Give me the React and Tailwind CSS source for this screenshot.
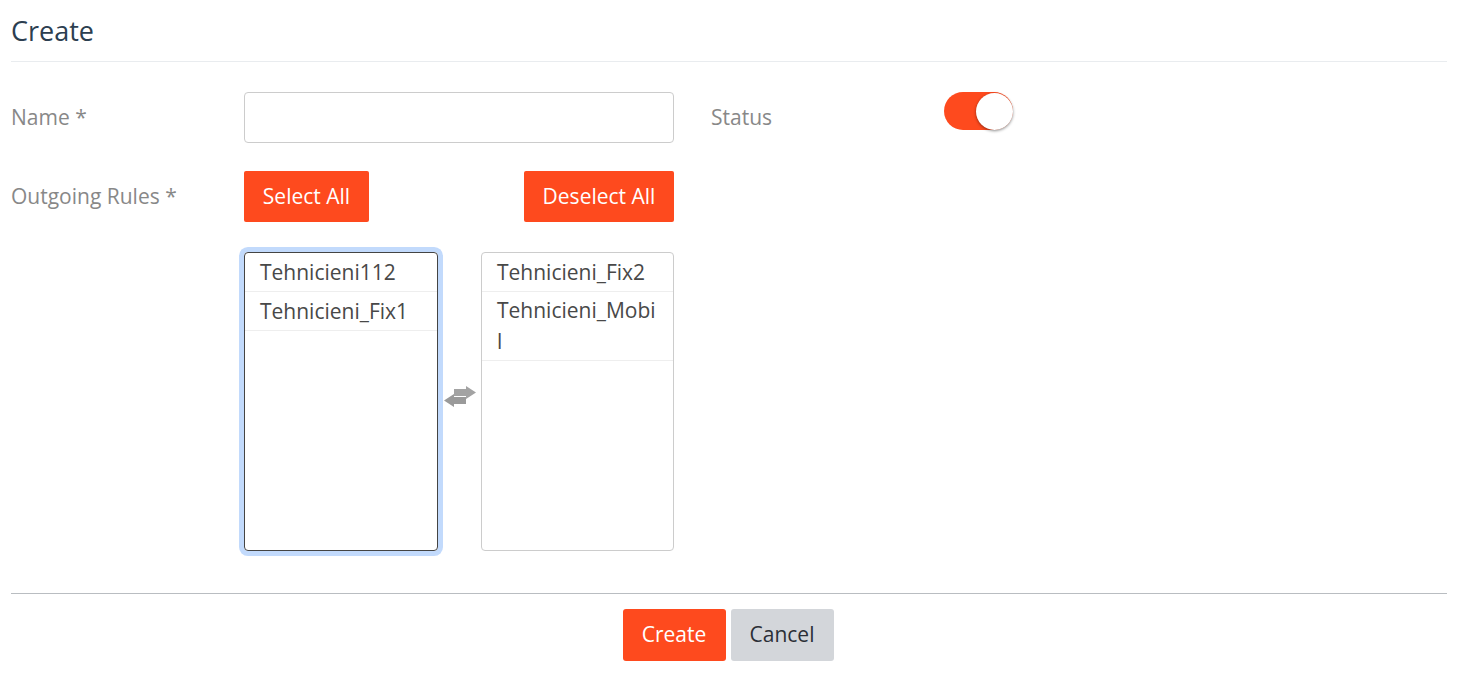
import React from "react";

function TransferIcon() {
  return (
    <svg width="34" height="22" viewBox="0 0 34 22">
      <path d="M11 3 H23 V0 L33 6.5 L23 13 V10 H11 Z" fill="#a3a3a3" />
      <path d="M23 11 H11 V8 L1 14.5 L11 21 V18 H23 Z" fill="#9a9a9a" />
    </svg>
  );
}

export default function App() {
  const font = { fontFamily: '"Open Sans", "Noto Sans", sans-serif' };
  return (
    <div className="w-[1461px] h-[673px] bg-white px-[11px] pt-[13px]" style={font}>
      <h1 className="text-[27px] leading-[36px] text-[#2c3e50] font-normal">Create</h1>
      <div className="mt-[12px] h-px bg-[#e9ecef] w-[1436px]" />

      <div className="mt-[30px] flex gap-[37px]">
        <div className="flex">
          <label className="w-[233px] text-[21px] text-[#888] flex items-center h-[51px]">Name *</label>
          <input className="w-[430px] h-[51px] border border-[#ccc] rounded-[4px] px-3 outline-none" />
        </div>
        <div className="flex">
          <label className="w-[233px] text-[21px] text-[#888] flex items-center h-[51px]">Status</label>
          <div className="h-[38px] w-[69px] rounded-full bg-[#fe4a1e] relative">
            <div className="absolute right-0 top-px w-[37px] h-[37px] rounded-full bg-white shadow-[0_1px_3px_rgba(0,0,0,0.45)]" />
          </div>
        </div>
      </div>

      <div className="mt-[28px] flex">
        <label className="w-[233px] text-[21px] text-[#888] flex items-center h-[51px]">Outgoing Rules *</label>
        <div className="w-[430px] flex justify-between">
          <button className="h-[51px] w-[125px] bg-[#fe4a1e] text-white text-[21px] rounded-[2px]">Select All</button>
          <button className="h-[51px] w-[150px] bg-[#fe4a1e] text-white text-[21px] rounded-[2px]">Deselect All</button>
        </div>
      </div>

      <div className="mt-[30px] ml-[233px] flex w-[430px]">
        <div className="w-[194px] h-[299px] border border-[#444] rounded-[4px] ring-[5px] ring-[#c2dafc] overflow-hidden">
          <div className="px-[15px] py-[2px] leading-[34px] text-[21px] text-[#484848] border-b border-[#eee]">Tehnicieni112</div>
          <div className="px-[15px] py-[2px] leading-[34px] text-[21px] text-[#484848] border-b border-[#eee]">Tehnicieni_Fix1</div>
        </div>
        <div className="w-[43px] flex items-center justify-center pb-[10px]">
          <TransferIcon />
        </div>
        <div className="w-[193px] h-[299px] border border-[#ccc] rounded-[4px] overflow-hidden">
          <div className="px-[15px] py-[2px] leading-[34px] text-[21px] text-[#484848] border-b border-[#eee]">Tehnicieni_Fix2</div>
          <div className="px-[15px] py-[3px] leading-[31px] text-[21px] text-[#484848] border-b border-[#eee] break-all">Tehnicieni_Mobil</div>
        </div>
      </div>

      <div className="mt-[42px] h-px bg-[#b9bdc1] w-[1436px]" />

      <div className="mt-[15px] flex justify-center gap-[5px] w-[1436px] pr-[2px]">
        <button className="h-[52px] w-[103px] bg-[#fe4a1e] text-white text-[21px] rounded-[3px]">Create</button>
        <button className="h-[52px] w-[103px] bg-[#d3d6da] text-[#2b2f36] text-[21px] rounded-[3px]">Cancel</button>
      </div>
    </div>
  );
}
